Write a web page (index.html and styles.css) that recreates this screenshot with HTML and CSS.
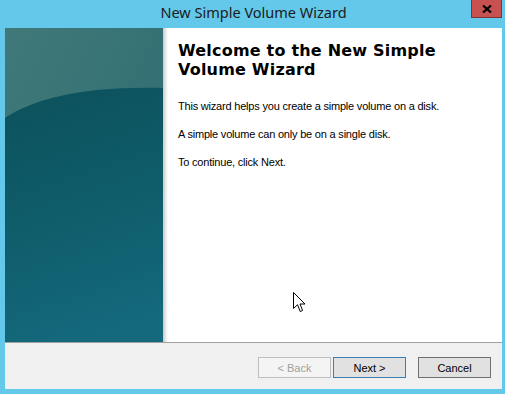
FILE: index.html
```html
<!DOCTYPE html>
<html lang="en">
  <head>
    <meta charset="UTF-8" />
    <title>New Simple Volume Wizard</title>
    <link rel="stylesheet" href="styles.css">
  </head>
  <body>
    <div class="window">
      <div class="titlebar">
        <div class="title">New Simple Volume Wizard</div>
        <div class="close-btn">
          <svg width="10" height="8" viewBox="0 0 10 8">
            <path d="M1 0.5 L9 7.5 M9 0.5 L1 7.5" stroke="#000" stroke-width="2.2" />
          </svg>
        </div>
      </div>

      <div class="frame">
        <div class="main">
          <div class="side-panel">
            <svg width="158" height="314" viewBox="0 0 158 314">
              <defs>
                <linearGradient id="topGrad" x1="0" y1="0" x2="1" y2="1">
                  <stop offset="0" stop-color="#417979" />
                  <stop offset="1" stop-color="#2a6a70" />
                </linearGradient>
                <linearGradient id="lowGrad" x1="0.3" y1="0" x2="0.5" y2="1">
                  <stop offset="0" stop-color="#0c525d" />
                  <stop offset="0.5" stop-color="#0f5d6b" />
                  <stop offset="1" stop-color="#14697c" />
                </linearGradient>
              </defs>
              <rect width="158" height="314" fill="url(#topGrad)" />
              <path d="M0 90 C 30 70, 80 58, 158 60 L158 314 L0 314 Z" fill="url(#lowGrad)" />
            </svg>
          </div>
          <div class="panel-shadow"></div>
          <div class="content">
            <h1 class="heading">Welcome to the New Simple<br />Volume Wizard</h1>
            <p class="text first">This wizard helps you create a simple volume on a disk.</p>
            <p class="text">A simple volume can only be on a single disk.</p>
            <p class="text">To continue, click Next.</p>
          </div>
        </div>

        <div class="footer">
          <button class="btn disabled">&lt; Back</button>
          <button class="btn default">Next &gt;</button>
          <button class="btn cancel">Cancel</button>
        </div>
      </div>
    </div>

    <!-- mouse pointer -->
    <svg class="pointer" width="13" height="21" viewBox="0 0 13 21">
      <path d="M0.5 0.5 L0.5 16.5 L4.5 12.7 L7.2 19.5 L9.6 18.5 L7 12 L12 12 Z" fill="#fff" stroke="#000" stroke-width="1" />
    </svg>
  </body>
</html>
```

FILE: styles.css
```css
body {
  margin: 0;
  padding: 0;
  background-color: #63c8e9;
  font-family: "Liberation Sans", Arial, sans-serif;
}

.window {
  width: 505px;
  height: 394px;
  display: flex;
  flex-direction: column;
}

.titlebar {
  height: 28px;
  position: relative;
  display: flex;
  justify-content: center;
}

.title {
  font-family: "Noto Sans", "Open Sans", sans-serif;
  font-size: 14.5px;
  line-height: 24px;
  color: #1b1b1b;
  padding-left: 2px;
}

.close-btn {
  position: absolute;
  top: 0;
  right: 3px;
  width: 29px;
  height: 17px;
  background-color: #c75050;
  border: 1px solid #7d3434;
  border-top: none;
  display: flex;
  align-items: center;
  justify-content: center;
}

.frame {
  margin: 0 3px 5px 5px;
  flex-grow: 1;
  display: flex;
  flex-direction: column;
  background-color: #fff;
}

.main {
  height: 314px;
  display: flex;
  background-color: #fff;
}

.side-panel {
  width: 158px;
  height: 314px;
}

.side-panel svg {
  display: block;
}

.panel-shadow {
  width: 5px;
  background: linear-gradient(to right, #c9c9c9, #ececec 60%, #fff);
}

.content {
  padding: 13px 0 0 10px;
}

.heading {
  margin: 0;
  font-family: "DejaVu Sans", Verdana, sans-serif;
  font-weight: bold;
  font-size: 16px;
  line-height: 19px;
  letter-spacing: 0.2px;
  color: #000;
}

.text {
  margin: 15px 0 0 0;
  font-size: 11px;
  line-height: 13px;
  letter-spacing: -0.2px;
  color: #000;
}

.text.first {
  margin-top: 21px;
}

.footer {
  flex-grow: 1;
  border-top: 1px solid #a0a0a0;
  background-color: #f0f0f0;
  display: flex;
  justify-content: flex-end;
  align-items: flex-start;
  padding: 14px 11px 0 0;
}

.btn {
  width: 73px;
  height: 21px;
  padding: 0;
  font-family: "Liberation Sans", Arial, sans-serif;
  font-size: 11px;
  color: #000;
  background-color: #e1e1e1;
  border: 1px solid #adadad;
  box-sizing: border-box;
}

.btn.disabled {
  color: #a0a0a0;
  background-color: #f4f4f4;
  border-color: #bfbfbf;
}

.btn.default {
  margin-left: 2px;
  border-color: #3c7fb1;
}

.btn.cancel {
  margin-left: 12px;
  border-color: #707070;
}

.pointer {
  position: absolute;
  left: 293px;
  top: 292px;
}
```
